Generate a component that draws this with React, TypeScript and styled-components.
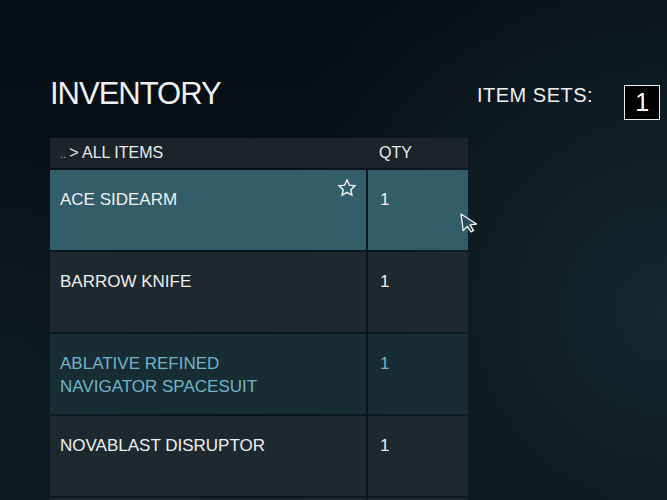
import React from "react";
import styled, { createGlobalStyle } from "styled-components";

const GlobalStyle = createGlobalStyle`
  html, body {
    margin: 0;
    padding: 0;
    width: 667px;
    height: 500px;
    overflow: hidden;
  }
  body {
    font-family: "Liberation Sans", Arial, sans-serif;
    background: #080f16;
  }
`;

const Page = styled.div`
  width: 667px;
  height: 500px;
  box-sizing: border-box;
  padding: 76px 0 0 50px;
  background:
    radial-gradient(ellipse 420px 420px at 100% 62%, #14282f 0%, #0e1d24 45%, rgba(10, 20, 27, 0) 100%),
    radial-gradient(ellipse 220px 320px at 0% 85%, #0f1d23 0%, rgba(10, 20, 27, 0) 100%),
    linear-gradient(180deg, #070d14 0%, #09131a 100%);
  display: grid;
  grid-template-columns: 418px auto;
  column-gap: 9px;
  align-items: start;
  overflow: hidden;
`;

const LeftColumn = styled.div`
  display: flex;
  flex-direction: column;
`;

const Title = styled.h1`
  margin: 0;
  font-size: 31px;
  line-height: 36px;
  font-weight: 400;
  letter-spacing: -1px;
  color: #eef1f2;
`;

const SetsRow = styled.div`
  display: flex;
  align-items: flex-start;
  margin-top: 7px;
`;

const SetsLabel = styled.span`
  font-size: 20px;
  line-height: 24px;
  color: #eef1f2;
  letter-spacing: 0.5px;
`;

const SetsBox = styled.div`
  margin: 2px 0 0 31px;
  width: 36px;
  height: 35px;
  box-sizing: border-box;
  border: 1px solid #e8ecee;
  background: #000;
  color: #ffffff;
  display: flex;
  align-items: center;
  justify-content: center;
  font-size: 25px;
`;

const Table = styled.div`
  position: relative;
  margin-top: 26px;
  display: flex;
  flex-direction: column;
  gap: 2px;
`;

const HeaderRow = styled.div`
  display: grid;
  grid-template-columns: 316px 100px;
  column-gap: 2px;
  height: 30px;
  background: #1d2328;
  color: #e9ecee;
  font-size: 16px;
  line-height: 30px;
`;

const HeaderCell = styled.div<{ $pad: number }>`
  padding-left: ${(p) => p.$pad}px;
  white-space: nowrap;
`;

const Dots = styled.span`
  font-size: 11px;
  color: #b8bfc4;
  margin-right: 3px;
`;

type Variant = "selected" | "normal" | "accent";

const rowBg: Record<Variant, string> = {
  selected: "#335d69",
  normal: "#1e282f",
  accent: "#182c34",
};

const rowFg: Record<Variant, string> = {
  selected: "#eef1f2",
  normal: "#eef1f2",
  accent: "#6fb5c9",
};

const Row = styled.div`
  display: grid;
  grid-template-columns: 316px 100px;
  column-gap: 2px;
  height: 80px;
`;

const Cell = styled.div<{ $variant: Variant; $pad: number }>`
  position: relative;
  background: ${(p) => rowBg[p.$variant]};
  color: ${(p) => rowFg[p.$variant]};
  padding: 18px 40px 0 ${(p) => p.$pad}px;
  font-size: 17px;
  line-height: 23px;
  box-sizing: border-box;
`;

const Line = styled.div`
  white-space: nowrap;
`;

const StarIcon = styled.svg`
  position: absolute;
  top: 8px;
  right: 9px;
  width: 20px;
  height: 20px;
`;

const Cursor = styled.svg`
  position: absolute;
  left: 410px;
  top: 75px;
  width: 19px;
  height: 20px;
  overflow: visible;
`;

const items: { lines: string[]; qty: string; variant: Variant; fav?: boolean }[] = [
  { lines: ["ACE SIDEARM"], qty: "1", variant: "selected", fav: true },
  { lines: ["BARROW KNIFE"], qty: "1", variant: "normal" },
  { lines: ["ABLATIVE REFINED", "NAVIGATOR SPACESUIT"], qty: "1", variant: "accent" },
  { lines: ["NOVABLAST DISRUPTOR"], qty: "1", variant: "normal" },
  { lines: [], qty: "", variant: "normal" },
];

export default function App() {
  return (
    <>
      <GlobalStyle />
      <Page>
        <LeftColumn>
          <Title>INVENTORY</Title>
          <Table>
            <HeaderRow>
              <HeaderCell $pad={10}>
                <Dots>..</Dots>&gt; ALL ITEMS
              </HeaderCell>
              <HeaderCell $pad={11}>QTY</HeaderCell>
            </HeaderRow>
            {items.map((it, i) => (
              <Row key={i}>
                <Cell $variant={it.variant} $pad={10}>
                  {it.lines.map((l) => (
                    <Line key={l}>{l}</Line>
                  ))}
                  {it.fav && (
                    <StarIcon viewBox="0 0 24 24">
                      <path
                        d="M12 2.5l2.9 6.1 6.6.8-4.9 4.6 1.3 6.6L12 17.3l-5.9 3.3 1.3-6.6-4.9-4.6 6.6-.8z"
                        fill="none"
                        stroke="#f2f4f5"
                        strokeWidth="1.7"
                        strokeLinejoin="miter"
                      />
                    </StarIcon>
                  )}
                </Cell>
                <Cell $variant={it.variant} $pad={12}>
                  {it.qty}
                </Cell>
              </Row>
            ))}
            <Cursor viewBox="0 0 19 20">
              <path
                d="M1 1 L3.2 17.5 L7.3 13.4 L11 19 L13.6 17.4 L10 11.8 L16.5 11 Z"
                fill="#2a4f5a"
                stroke="#f2f4f5"
                strokeWidth="1.3"
                strokeLinejoin="round"
              />
            </Cursor>
          </Table>
        </LeftColumn>
        <SetsRow>
          <SetsLabel>ITEM SETS:</SetsLabel>
          <SetsBox>1</SetsBox>
        </SetsRow>
      </Page>
    </>
  );
}
